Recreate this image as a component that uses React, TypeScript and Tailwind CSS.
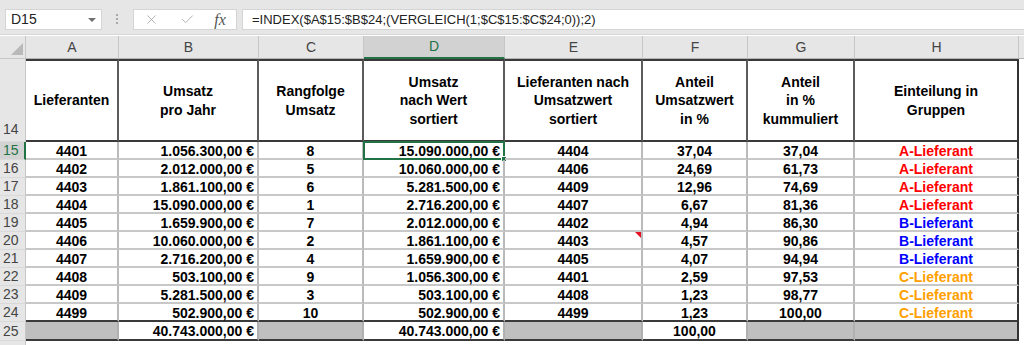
import { X, Check } from "lucide-react";

type Group = "A" | "B" | "C";

const COL_W = ["w-[93px]", "w-[140px]", "w-[105px]", "w-[141px]", "w-[138px]", "w-[105px]", "w-[107px]", "w-[164px]"];
const LETTERS = ["A", "B", "C", "D", "E", "F", "G", "H"];
// B and D hold money, right-aligned like Excel's currency format
const ALIGN = [
    "justify-center",
    "justify-end pr-[3px]",
    "justify-center",
    "justify-end pr-[3px]",
    "justify-center",
    "justify-center",
    "justify-center",
    "justify-center",
];

const HEADERS = [
    "Lieferanten",
    "Umsatz\npro Jahr",
    "Rangfolge\nUmsatz",
    "Umsatz\nnach Wert\nsortiert",
    "Lieferanten nach\nUmsatzwert\nsortiert",
    "Anteil\nUmsatzwert\nin %",
    "Anteil\nin %\nkummuliert",
    "Einteilung in\nGruppen",
];

const ROWS: [string, string, string, string, string, string, string, Group][] = [
    ["4401", "1.056.300,00 €", "8", "15.090.000,00 €", "4404", "37,04", "37,04", "A"],
    ["4402", "2.012.000,00 €", "5", "10.060.000,00 €", "4406", "24,69", "61,73", "A"],
    ["4403", "1.861.100,00 €", "6", "5.281.500,00 €", "4409", "12,96", "74,69", "A"],
    ["4404", "15.090.000,00 €", "1", "2.716.200,00 €", "4407", "6,67", "81,36", "A"],
    ["4405", "1.659.900,00 €", "7", "2.012.000,00 €", "4402", "4,94", "86,30", "B"],
    ["4406", "10.060.000,00 €", "2", "1.861.100,00 €", "4403", "4,57", "90,86", "B"],
    ["4407", "2.716.200,00 €", "4", "1.659.900,00 €", "4405", "4,07", "94,94", "B"],
    ["4408", "503.100,00 €", "9", "1.056.300,00 €", "4401", "2,59", "97,53", "C"],
    ["4409", "5.281.500,00 €", "3", "503.100,00 €", "4408", "1,23", "98,77", "C"],
    ["4499", "502.900,00 €", "10", "502.900,00 €", "4499", "1,23", "100,00", "C"],
];

const GROUP_COLOR: Record<Group, string> = {
    A: "text-[#ff0000]",
    B: "text-[#0000ff]",
    C: "text-[#ffa000]",
};

const TOTALS = ["", "40.743.000,00 €", "", "40.743.000,00 €", "", "100,00", "", ""];

function FormulaBar() {
    return (
        <div className="h-[35px] bg-[#e6e6e6] flex items-start pt-[9px] border-b border-[#d6d6d6]">
            {/* Name box */}
            <div className="ml-[5px] w-[97px] h-[21px] bg-white border border-[#d4d4d4] flex items-center pl-[5px] text-[14px] text-[#222]">
                D15
                <span className="ml-auto mr-[5px] w-0 h-0 border-l-[4px] border-r-[4px] border-t-[4px] border-l-transparent border-r-transparent border-t-[#707070]" />
            </div>
            <div className="ml-[14px] mt-[5px] flex flex-col gap-[2px]">
                <span className="w-[2px] h-[2px] bg-[#a8a8a8]" />
                <span className="w-[2px] h-[2px] bg-[#a8a8a8]" />
                <span className="w-[2px] h-[2px] bg-[#a8a8a8]" />
            </div>
            {/* Cancel / enter / insert function */}
            <div className="ml-[15px] w-[104px] h-[21px] bg-white border border-[#d4d4d4] flex items-center pl-[6px]">
                <span className="w-[22px] flex justify-center">
                    <X size={15} strokeWidth={1.2} className="text-[#9a9a9a]" />
                </span>
                <span className="ml-[14px] w-[22px] flex justify-center">
                    <Check size={15} strokeWidth={1.2} className="text-[#9a9a9a]" />
                </span>
                <span className="ml-[11px] w-[22px] flex justify-center font-['Liberation_Serif',serif] italic text-[16px] text-[#555] leading-none">
                    fx
                </span>
            </div>
            <div className="ml-[5px] flex-1 h-[21px] bg-white border border-r-0 border-[#d4d4d4] flex items-center pl-[9px] text-[13px] text-[#222] whitespace-nowrap">
                =INDEX($A$15:$B$24;(VERGLEICH(1;$C$15:$C$24;0));2)
            </div>
        </div>
    );
}

function ColumnHeaders() {
    return (
        <div className="h-[23px] flex bg-[#e6e6e6] mt-px">
            <div className="w-[26px] shrink-0 flex items-end justify-end pr-[2px] pb-[3px] border-r border-b border-[#c6c6c6]">
                <span className="w-0 h-0 border-l-[12px] border-l-transparent border-b-[12px] border-b-[#b9b9b9]" />
            </div>
            {LETTERS.map((l, i) => (
                <div
                    key={l}
                    className={`${COL_W[i]} shrink-0 flex items-center justify-center text-[14px] border-r border-[#c6c6c6] ${
                        l === "D"
                            ? "bg-[#d2d2d2] text-[#217346] border-b-2 border-b-[#217346]"
                            : "text-[#444] border-b border-b-[#b4b4b4]"
                    }`}
                >
                    {l}
                </div>
            ))}
            <div className="flex-1 border-b border-[#b4b4b4]" />
        </div>
    );
}

function RowHead({ n, active, bottom }: { n: number; active?: boolean; bottom?: boolean }) {
    return (
        <div
            className={`w-[26px] shrink-0 flex pl-[3px] text-[14px] border-b border-[#d9d9d9] ${
                bottom ? "items-end pb-[1px]" : "items-center"
            } ${active ? "bg-[#d2d2d2] text-[#217346] border-r-2 border-r-[#217346]" : "bg-[#e6e6e6] text-[#444] border-r border-r-[#c6c6c6]"}`}
        >
            {n}
        </div>
    );
}

export default function App() {
    return (
        <div className="w-[1024px] h-[345px] overflow-hidden bg-white font-['Liberation_Sans',Arial,sans-serif]">
            <FormulaBar />
            <ColumnHeaders />

            {/* Row 14: table header */}
            <div className="h-[83px] flex">
                <RowHead n={14} bottom />
                {HEADERS.map((h, i) => (
                    <div
                        key={i}
                        className={`${COL_W[i]} shrink-0 flex items-center justify-center text-center whitespace-pre-line text-[14px] leading-[18.5px] font-bold text-black border-t-2 border-t-[#3a3a3a] border-b-2 border-b-[#3a3a3a] border-r-2 ${
                            i === 7 ? "border-r-[#333]" : "border-r-[#5c5c5c]"
                        }`}
                    >
                        {h}
                    </div>
                ))}
            </div>

            {/* Rows 15-24 */}
            {ROWS.map((row, r) => (
                <div key={r} className="h-[18px] flex">
                    <RowHead n={15 + r} active={r === 0} />
                    {row.map((v, i) => {
                        const isGroup = i === 7;
                        const text = isGroup ? `${v}-Lieferant` : v;
                        return (
                            <div
                                key={i}
                                className={`${COL_W[i]} ${ALIGN[i]} relative shrink-0 flex items-center pt-[1px] text-[14px] leading-none font-bold border-b-2 border-r-2 ${
                                    r === 9 ? "border-b-[#3a3a3a]" : "border-b-[#c8c8c8]"
                                } ${i === 7 ? "border-r-[#333]" : "border-r-[#bababa]"} ${
                                    isGroup ? GROUP_COLOR[v as Group] : "text-black"
                                }`}
                            >
                                {text}
                                {r === 0 && i === 3 && (
                                    <>
                                        <span className="absolute -left-px -top-px -right-[2px] -bottom-[2px] border-2 border-[#217346]" />
                                        <span className="absolute -right-[4px] -bottom-[4px] w-[6px] h-[6px] bg-[#217346] border border-white" />
                                    </>
                                )}
                                {r === 5 && i === 4 && (
                                    <span className="absolute top-0 right-0 w-0 h-0 border-l-[6px] border-l-transparent border-t-[6px] border-t-[#e81123]" />
                                )}
                            </div>
                        );
                    })}
                </div>
            ))}

            {/* Row 25: totals */}
            <div className="h-[19px] flex">
                <RowHead n={25} />
                {TOTALS.map((v, i) => (
                    <div
                        key={i}
                        className={`${COL_W[i]} ${ALIGN[i]} shrink-0 flex items-center pt-[1px] text-[14px] leading-none font-bold text-black border-b-2 border-b-[#3a3a3a] border-r-2 ${
                            i === 7 ? "border-r-[#333]" : "border-r-[#b0b0b0]"
                        } ${v ? "bg-white" : "bg-[#bfbfbf]"}`}
                    >
                        {v}
                    </div>
                ))}
            </div>
            <div className="flex">
                <div className="w-[26px] h-[6px] bg-[#e6e6e6] border-r border-[#c6c6c6]" />
            </div>
        </div>
    );
}
